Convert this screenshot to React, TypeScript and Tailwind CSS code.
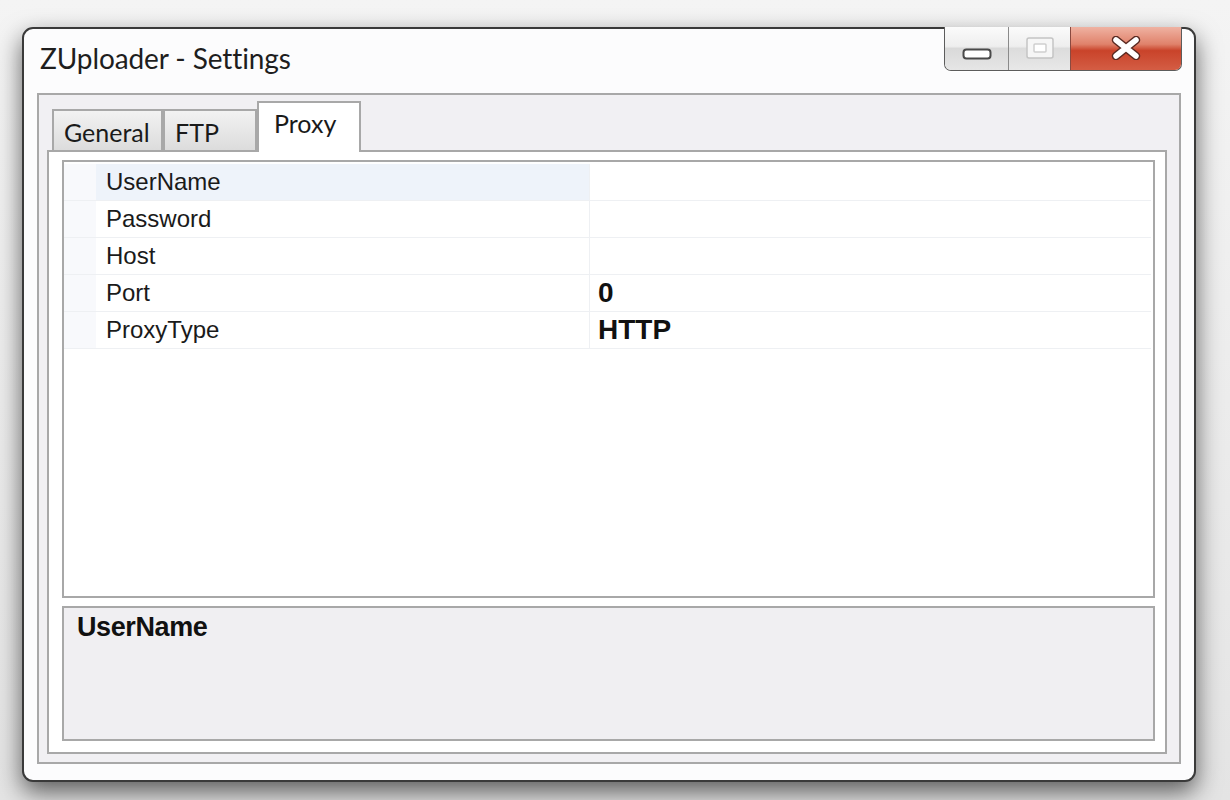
import React from "react";

const rows: { name: string; value: string }[] = [
    { name: "UserName", value: "" },
    { name: "Password", value: "" },
    { name: "Host", value: "" },
    { name: "Port", value: "0" },
    { name: "ProxyType", value: "HTTP" },
];

const CaptionButtons: React.FC = () => {
    return <div className="flex h-[44px] -mt-[2px] rounded-b-[7px] border border-t-0 border-[#5c5c5c] overflow-hidden shadow-[0_1px_0_rgba(255,255,255,0.9)]">
        <div className="w-[64px] grid place-content-center border-r border-[#8a8a8a] bg-[linear-gradient(#fbfbfb_0%,#eeeeee_45%,#d9d9d9_50%,#e6e6e6_100%)]">
            <svg width="30" height="12" viewBox="0 0 30 12" className="mt-[10px]">
                <rect x="1.5" y="1.5" width="27" height="9" rx="3" fill="#fff" stroke="#4a4a4a" strokeWidth="2" />
            </svg>
        </div>
        <div className="w-[62px] grid place-content-center border-r border-[#8a4a40] bg-[linear-gradient(#fbfbfb_0%,#eeeeee_45%,#dcdcdc_50%,#e8e8e8_100%)]">
            <svg width="28" height="22" viewBox="0 0 28 22" className="-mt-[2px]">
                <rect x="1" y="1" width="26" height="20" rx="2" fill="#f6f6f6" stroke="#c4c4c4" strokeWidth="1.5" />
                <rect x="8" y="7" width="12" height="8" rx="1" fill="#fff" stroke="#cfcfcf" strokeWidth="1.5" />
            </svg>
        </div>
        <div className="w-[110px] grid place-content-center bg-[linear-gradient(#efb2a2_0%,#e0826b_40%,#c9432a_55%,#d45d44_100%)]">
            <svg width="30" height="24" viewBox="0 0 30 24" className="-mt-[2px]">
                <path d="M5 4 L25 20 M25 4 L5 20" stroke="#5a2a22" strokeWidth="8.5" strokeLinecap="round" />
                <path d="M5 4 L25 20 M25 4 L5 20" stroke="#ffffff" strokeWidth="5.5" strokeLinecap="round" />
            </svg>
        </div>
    </div>
}

const Tab: React.FC<{ label: string; active?: boolean; width: string }> = ({ label, active, width }) => {
    if (active) {
        return <div className={`${width} h-[51px] -mb-[2px] z-10 border-2 border-b-0 border-[#a8a8a8] bg-white pl-[15px] pt-[4px] text-[25px] leading-[32px] text-[#1a1a1a]`}>
            {label}
        </div>
    }
    return <div className={`${width} h-[41px] self-end border-2 border-b-0 border-[#a8a8a8] bg-[linear-gradient(#f2f2f2,#dcdcdc)] pl-[10px] pt-[5px] text-[25px] leading-[32px] text-[#1a1a1a]`}>
        {label}
    </div>
}

export default function App() {
    return <div className="w-[1230px] h-[800px] bg-[linear-gradient(#f4f4f4,#e4e4e4)] pt-[27px] pl-[22px] font-['Lato',sans-serif]">
        <div className="w-[1174px] h-[755px] rounded-[11px] border-2 border-[#3a3a3a] bg-[#fcfcfd] shadow-[0_10px_24px_rgba(0,0,0,0.6)] flex flex-col">
            {/* title bar */}
            <div className="h-[64px] flex justify-between items-start pl-[16px] pr-[12px]">
                <h1 className="pt-[12px] text-[28px] leading-[34px] text-[#1e1e1e] tracking-[-0.1px]">ZUploader - Settings</h1>
                <CaptionButtons />
            </div>

            {/* client area */}
            <div className="flex-1 mx-[13px] mb-[16px] border-2 border-[#a8a8a8] bg-[#f1f0f3] pl-[8px] pr-[12px] pt-[6px] pb-[8px] flex flex-col">
                <div className="flex items-end pl-[5px] h-[49px]">
                    <Tab label="General" width="w-[111px]" />
                    <Tab label="FTP" width="w-[94px]" />
                    <Tab label="Proxy" active width="w-[104px]" />
                </div>
                <div className="flex-1 border-2 border-[#a8a8a8] bg-white pl-[13px] pr-[10px] pt-[8px] pb-[11px] flex flex-col gap-[8px] font-['Liberation_Sans',Arial,sans-serif]">
                    {/* property grid */}
                    <div className="h-[438px] border-2 border-[#a8a8a8] bg-white pt-[2px] pr-[2px]">
                        {rows.map((row, i) => (
                            <div key={row.name} className="h-[37px] grid grid-cols-[32px_494px_1fr] border-b border-[#eef0f3]">
                                <span className="bg-[#f8f9fc]" />
                                <span className={`pl-[10px] text-[24px] leading-[36px] text-[#1a1a1a] border-r border-[#eef0f3] ${i === 0 ? "bg-[#eef3fa]" : ""}`}>{row.name}</span>
                                <span className="pl-[8px] text-[28px] leading-[36px] font-bold text-[#111]">{row.value}</span>
                            </div>
                        ))}
                    </div>
                    {/* description pane */}
                    <div className="flex-1 border-2 border-[#a8a8a8] bg-[#f0eff2] pl-[13px] pt-[4px]">
                        <p className="text-[27px] leading-[30px] font-bold tracking-[-0.4px] text-[#111]">UserName</p>
                    </div>
                </div>
            </div>
        </div>
    </div>
}
